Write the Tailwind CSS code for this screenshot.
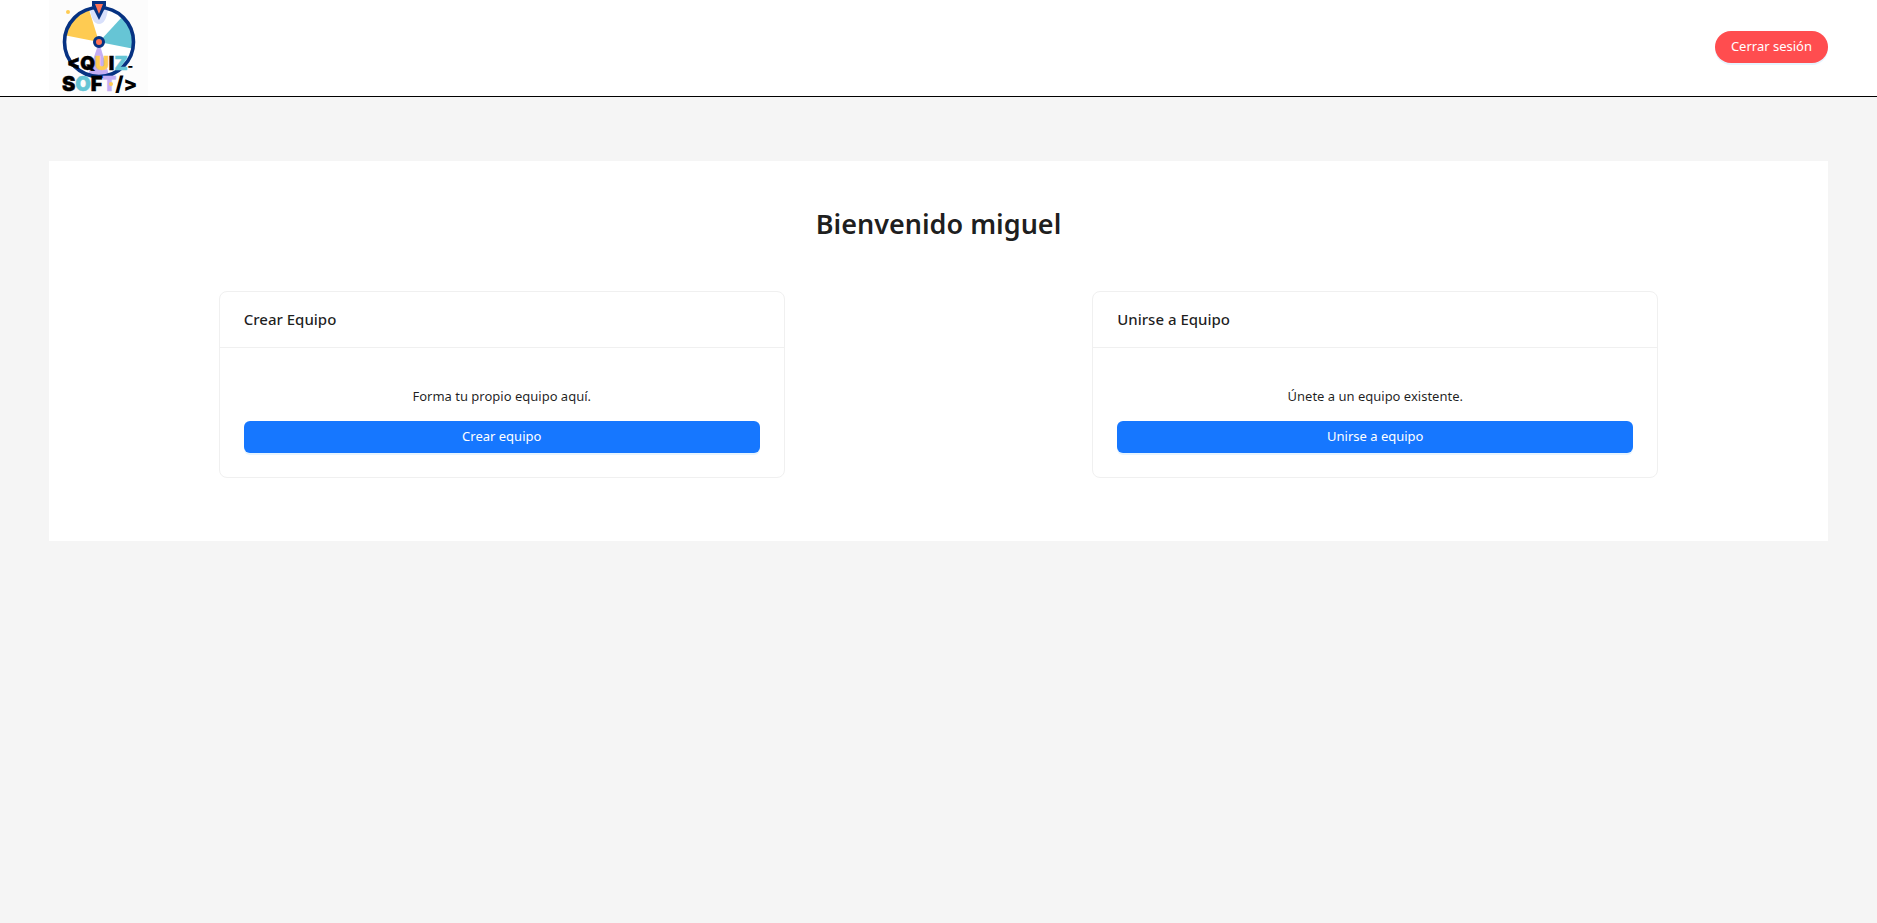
<!DOCTYPE html>
<html lang="es">
<head>
<meta charset="utf-8">
<meta name="viewport" content="width=device-width, initial-scale=1">
<title>Quiz-Soft</title>
<script src="https://cdn.jsdelivr.net/npm/@tailwindcss/browser@4"></script>
</head>
<body class="min-h-screen bg-[#f5f5f5] font-['Segoe_UI','Noto_Sans',sans-serif] text-[13px] text-black/88">
<header class="flex h-[97px] items-start justify-between border-b border-black bg-white px-[49px]">
  <a href="#" aria-label="Quiz-Soft" class="block">
    <svg class="block h-24 w-[99px]" viewBox="0 0 99 96">
      <rect width="99" height="96" fill="#fcfcfc"/>
      <circle cx="50" cy="42" r="35" fill="#fff"/>
      <path d="M50 42 L17 35.500 A34 34 0 0 1 40 9.500 Z" fill="#fecb52"/>
      <path d="M50 42 L73 17 A34 34 0 0 1 83 48.500 Z" fill="#66c5d5"/>
      <path d="M50 42 L60 75 A34 34 0 0 1 39 75 Z" fill="#c4aef3"/>
      <path d="M41 9 Q43 24 50 24 Q57 24 59 9 Z" fill="#d8e0fb"/>
      <circle cx="50" cy="42" r="34.500" fill="none" stroke="#063282" stroke-width="3.600"/>
      <circle cx="50" cy="42" r="4.500" fill="#ff7355" stroke="#063282" stroke-width="3"/>
      <path d="M43 1 H57 V6 L50 20 L43 6 Z" fill="#063282"/>
      <path d="M46 4 H54 L50 14 Z" fill="#ff7355"/>
      <circle cx="19" cy="12" r="2" fill="#fecb52"/>
      <g font-family="Inter, sans-serif" font-weight="900" font-size="20" stroke-width="0.500">
        <text x="18" y="70" font-size="19"><tspan stroke="#000">&lt;Q</tspan><tspan fill="#fecb52" stroke="#fecb52">U</tspan><tspan stroke="#000">I</tspan><tspan fill="#66c5d5" stroke="#66c5d5">Z</tspan><tspan font-size="12">-</tspan></text>
        <text x="13" y="91"><tspan stroke="#000">S</tspan><tspan fill="#66c5d5" stroke="#66c5d5">O</tspan><tspan stroke="#000">F</tspan><tspan fill="#c4aef3" stroke="#c4aef3">T</tspan>/&gt;</text>
      </g>
      <circle cx="62" cy="84" r="2" fill="#fecb52"/>
    </svg>
  </a>
  <button type="button" class="mt-[31px] h-8 rounded-full bg-[#ff4d4f] px-4 whitespace-nowrap text-white shadow-[0_2px_0_rgba(5,145,255,0.1)]">Cerrar sesión</button>
</header>
<main class="mx-[49px] mt-16 bg-white px-4 pt-11 pb-[63px]">
  <h1 class="text-center text-[27px] leading-[38px] font-semibold">Bienvenido miguel</h1>
  <div class="mt-12 flex justify-around">
    <section class="w-[32.4%] rounded-lg border border-[#f0f0f0] bg-white">
      <h2 class="flex h-14 items-center border-b border-[#f0f0f0] px-6 text-[15px] font-medium">Crear Equipo</h2>
      <div class="px-6 pt-[37px] pb-6">
        <p class="text-center leading-[22px]">Forma tu propio equipo aquí.</p>
        <button type="button" class="mt-3.5 h-8 w-full rounded-md bg-[#1677ff] text-white shadow-[0_2px_0_rgba(5,145,255,0.1)]">Crear equipo</button>
      </div>
    </section>
    <section class="w-[32.4%] rounded-lg border border-[#f0f0f0] bg-white">
      <h2 class="flex h-14 items-center border-b border-[#f0f0f0] px-6 text-[15px] font-medium">Unirse a Equipo</h2>
      <div class="px-6 pt-[37px] pb-6">
        <p class="text-center leading-[22px]">Únete a un equipo existente.</p>
        <button type="button" class="mt-3.5 h-8 w-full rounded-md bg-[#1677ff] text-white shadow-[0_2px_0_rgba(5,145,255,0.1)]">Unirse a equipo</button>
      </div>
    </section>
  </div>
</main>
</body>
</html>
